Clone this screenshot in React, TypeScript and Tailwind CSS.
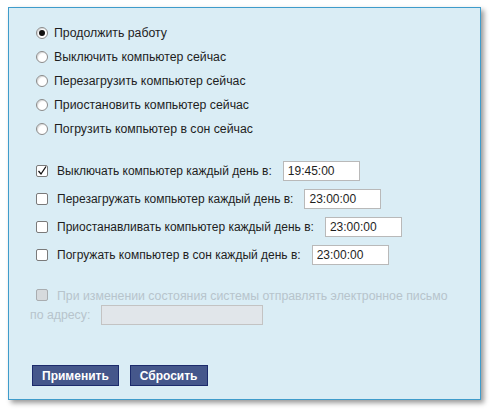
import React, { useState } from "react";

const radios = [
  "Продолжить работу",
  "Выключить компьютер сейчас",
  "Перезагрузить компьютер сейчас",
  "Приостановить компьютер сейчас",
  "Погрузить компьютер в сон сейчас",
];

const schedules = [
  { label: "Выключать компьютер каждый день в:", time: "19:45:00", on: true },
  { label: "Перезагружать компьютер каждый день в:", time: "23:00:00", on: false },
  { label: "Приостанавливать компьютер каждый день в:", time: "23:00:00", on: false },
  { label: "Погружать компьютер в сон каждый день в:", time: "23:00:00", on: false },
];

function Radio({ checked }: { checked: boolean }) {
  return (
    <span className="flex h-[12px] w-[12px] flex-shrink-0 items-center justify-center rounded-full border border-[#8a8a8a] bg-white shadow-[inset_1px_1px_1px_rgba(0,0,0,0.15)]">
      {checked && <span className="h-[6px] w-[6px] rounded-full bg-[#111]" />}
    </span>
  );
}

function Check({ checked, disabled }: { checked: boolean; disabled?: boolean }) {
  return (
    <span
      className={`flex h-[12px] w-[12px] flex-shrink-0 items-center justify-center rounded-[2px] border ${
        disabled ? "border-[#a9adb0] bg-[#d6dadd]" : "border-[#7a7a7a] bg-white"
      }`}
    >
      {checked && (
        <svg width="10" height="10" viewBox="0 0 10 10">
          <path d="M1.5 5 L4 8 L9 0.5" fill="none" stroke="#111" strokeWidth="1.3" />
        </svg>
      )}
    </span>
  );
}

export default function App() {
  const [choice, setChoice] = useState(0);
  const [checks, setChecks] = useState(schedules.map((s) => s.on));

  return (
    <div
      className="h-[414px] w-[494px] bg-white pl-[8px] pt-[7px] text-[12px] text-[#1e1e1e]"
      style={{ fontFamily: '"Liberation Sans", Arial, sans-serif' }}
    >
      <div className="flex h-[393px] w-[473px] flex-col border border-[#3f9ccb] bg-[#daedf5] pl-[21px] pt-[13px] shadow-[3px_3px_5px_rgba(0,0,0,0.4)]">
        {/* Immediate actions */}
        <div className="flex flex-col text-[12.3px]">
          {radios.map((r, i) => (
            <div
              key={r}
              onClick={() => setChoice(i)}
              className="flex h-[24px] cursor-pointer items-center"
            >
              <span className="ml-[6px] mr-[6px]">
                <Radio checked={choice === i} />
              </span>
              <span>{r}</span>
            </div>
          ))}
        </div>

        {/* Scheduled actions */}
        <div className="mt-[16px] flex flex-col">
          {schedules.map((s, i) => (
            <div key={s.label} className="flex h-[28px] items-center">
              <span
                className="ml-[6px] mr-[9px] cursor-pointer"
                onClick={() => setChecks((p) => p.map((v, j) => (j === i ? !v : v)))}
              >
                <Check checked={checks[i]} />
              </span>
              <span>{s.label}</span>
              <input
                type="text"
                defaultValue={s.time}
                className="ml-[11px] h-[20px] w-[77px] border border-[#b9b9b9] bg-white px-[4px] text-[12px] text-[#1e1e1e] outline-none"
              />
            </div>
          ))}
        </div>

        {/* Email notification (disabled) */}
        <div className="mt-[19px] flex flex-col text-[12.3px] text-[#b7c4cc]">
          <div className="flex h-[17px] items-center">
            <span className="mb-[3px] ml-[6px] mr-[9px]">
              <Check checked={false} disabled />
            </span>
            <span>При изменении состояния системы отправлять электронное письмо</span>
          </div>
          <div className="flex h-[20px] items-center">
            <span>по адресу:</span>
            <input
              type="text"
              disabled
              className="ml-[11px] h-[20px] w-[162px] border border-[#c3c3c3] bg-[#e1e6ea]"
            />
          </div>
        </div>

        <div className="mt-auto mb-[13px] ml-[2px] flex gap-[11px]">
          <button className="h-[21px] border border-[#1c2b6c] bg-[#45578b] px-[9px] text-[12px] font-bold text-white">
            Применить
          </button>
          <button className="h-[21px] border border-[#1c2b6c] bg-[#45578b] px-[9px] text-[12px] font-bold text-white">
            Сбросить
          </button>
        </div>
      </div>
    </div>
  );
}
